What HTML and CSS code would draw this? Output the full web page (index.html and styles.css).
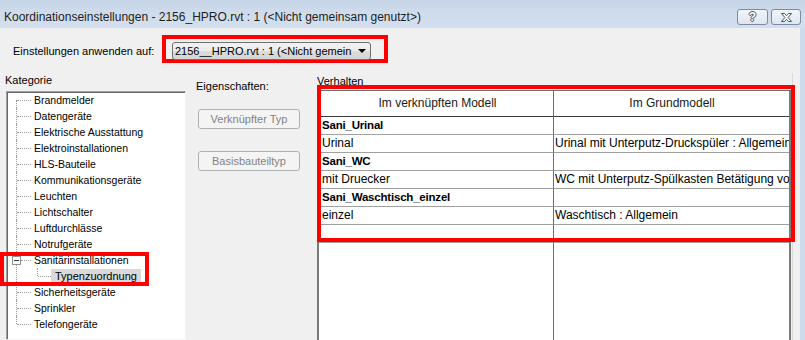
FILE: index.html
```html
<!doctype html>
<html lang="de">
	<head>
		<meta charset="UTF-8" />
		<meta name="viewport" content="width=device-width, initial-scale=1.0" />
		<title>Koordinationseinstellungen</title>
		<link rel="stylesheet" href="styles.css">
	</head>
	<body>
		<div class="window">
			<div class="titlebar">
				<span class="title">Koordinationseinstellungen - 2156_HPRO.rvt : 1 (&lt;Nicht gemeinsam genutzt&gt;)</span>
				<div class="caption-buttons">
					<button type="button" class="caption-btn help">?</button>
					<button type="button" class="caption-btn close">
						<svg width="11" height="9" viewBox="0 0 11 9">
							<path d="M0.5 0.5h3l2 2.2l2-2.2h3l-3.4 4l3.4 4h-3l-2-2.2l-2 2.2h-3l3.4-4z" fill="#fff" stroke="#4b5563" stroke-width="1" />
						</svg>
					</button>
				</div>
			</div>

			<div class="client">
				<div class="apply-row">
					<label class="apply-label">Einstellungen anwenden auf:</label>
					<div class="mark-combo">
						<div class="combo">
							<span class="combo-text">2156__HPRO.rvt : 1 (&lt;Nicht gemeinsam genutzt&gt;)</span>
							<span class="combo-arrow"></span>
						</div>
					</div>
				</div>

				<div class="main">
					<section class="category">
						<div class="cat-label">Kategorie</div>
						<ul class="tree">
							<li class="node"><span class="node-text">Brandmelder</span></li>
							<li class="node"><span class="node-text">Datengeräte</span></li>
							<li class="node"><span class="node-text">Elektrische Ausstattung</span></li>
							<li class="node"><span class="node-text">Elektroinstallationen</span></li>
							<li class="node"><span class="node-text">HLS-Bauteile</span></li>
							<li class="node"><span class="node-text">Kommunikationsgeräte</span></li>
							<li class="node"><span class="node-text">Leuchten</span></li>
							<li class="node"><span class="node-text">Lichtschalter</span></li>
							<li class="node"><span class="node-text">Luftdurchlässe</span></li>
							<li class="node"><span class="node-text">Notrufgeräte</span></li>
							<li class="node open">
								<span class="expander"></span>
								<span class="node-text">Sanitärinstallationen</span>
								<ul class="subtree">
									<li class="child"><span class="node-text selected">Typenzuordnung</span></li>
								</ul>
							</li>
							<li class="node"><span class="node-text">Sicherheitsgeräte</span></li>
							<li class="node"><span class="node-text">Sprinkler</span></li>
							<li class="node"><span class="node-text">Telefongeräte</span></li>
						</ul>
					</section>

					<section class="props">
						<div class="props-label">Eigenschaften:</div>
						<button type="button" class="btn" disabled>Verknüpfter Typ</button>
						<button type="button" class="btn second" disabled>Basisbauteiltyp</button>
					</section>

					<section class="behavior">
						<div class="behavior-label">Verhalten</div>
						<div class="grid">
							<div class="cell head first">Im verknüpften Modell</div>
							<div class="cell head">Im Grundmodell</div>

							<div class="cell first group">Sani_Urinal</div>
							<div class="cell"></div>
							<div class="cell first">Urinal</div>
							<div class="cell">Urinal mit Unterputz-Druckspüler : Allgemein</div>

							<div class="cell first group">Sani_WC</div>
							<div class="cell"></div>
							<div class="cell first">mit Druecker</div>
							<div class="cell">WC mit Unterputz-Spülkasten Betätigung von vorne</div>

							<div class="cell first group">Sani_Waschtisch_einzel</div>
							<div class="cell"></div>
							<div class="cell first">einzel</div>
							<div class="cell">Waschtisch : Allgemein</div>

							<div class="cell first"></div>
							<div class="cell"></div>

							<div class="cell first filler"></div>
							<div class="cell filler"></div>
						</div>
					</section>
				</div>
			</div>

			<!-- red annotation frames drawn over the dialog -->
			<div class="mark mark-tree"></div>
			<div class="mark mark-grid"></div>
		</div>
	</body>
</html>
```

FILE: styles.css
```css
* {
	box-sizing: border-box;
}

html,
body,
ul {
	margin: 0;
	padding: 0;
}

body {
	font-family: "Liberation Sans", Arial, sans-serif;
	font-size: 11px;
	color: #000;
	background: #f0f0f0;
}

.window {
	position: relative;
	width: 805px;
	height: 340px;
	display: flex;
	flex-direction: column;
	background: #cedbeb;
	overflow: hidden;
}

/* title bar */

.titlebar {
	height: 28px;
	flex: none;
	display: flex;
	justify-content: space-between;
	padding: 0 4px;
	background: linear-gradient(#c4d3e6, #cfdcec 45%, #d3dfee);
}

.title {
	font-size: 12px;
	line-height: 14px;
	margin-top: 10px;
	color: #1e1e1e;
	white-space: nowrap;
}

.caption-buttons {
	display: flex;
	gap: 3px;
	margin-top: 9px;
}

.caption-btn {
	width: 31px;
	height: 16px;
	padding: 0;
	border: 1px solid #7b8ba0;
	border-radius: 3px;
	background: linear-gradient(#f1f5fa, #dde6f1);
	display: flex;
	align-items: center;
	justify-content: center;
	font-family: "Liberation Sans", Arial, sans-serif;
	font-weight: bold;
	font-size: 12px;
	line-height: 12px;
	color: #fff;
}

.caption-btn.close {
	width: 30px;
}

.caption-btn.help {
	text-shadow: -1px 0 #4b5563, 1px 0 #4b5563, 0 -1px #4b5563, 0 1px #4b5563;
}

/* dialog body */

.client {
	flex: 1;
	min-height: 0;
	margin-right: 5px;
	background: #f0f0f0;
	display: flex;
	flex-direction: column;
}

.apply-row {
	height: 45px;
	flex: none;
	display: flex;
	align-items: flex-start;
	padding: 7px 0 0 13px;
}

.apply-label {
	width: 149px;
	margin-top: 9px;
	line-height: 14px;
	white-space: nowrap;
}

.mark-combo {
	height: 28px;
	border: 4px solid #ff0000;
	padding: 3px 13px 0 6px;
}

.combo {
	width: 199px;
	height: 18px;
	border: 1px solid #707070;
	border-radius: 3px;
	background: linear-gradient(#f2f2f2, #ebebeb 50%, #dddddd 51%, #d4d4d4);
	display: flex;
	align-items: center;
	padding: 0 4px 0 2px;
}

.combo-text {
	flex: 1;
	overflow: hidden;
	white-space: nowrap;
	line-height: 14px;
}

.combo-arrow {
	width: 0;
	height: 0;
	margin-left: 6px;
	border-left: 4px solid transparent;
	border-right: 4px solid transparent;
	border-top: 4px solid #000;
}

.main {
	flex: 1;
	min-height: 0;
	display: flex;
	padding-left: 5px;
}

/* category tree */

.category {
	width: 181px;
	flex: none;
	display: flex;
	flex-direction: column;
}

.cat-label {
	height: 18px;
	line-height: 14px;
}

.tree {
	flex: 1;
	margin-left: 1px;
	list-style: none;
	font-size: 10.5px;
	background: #fff;
	border: 1px solid;
	border-color: #a0a0a0 #f4f4f4 #f4f4f4 #a0a0a0;
	box-shadow: inset 1px 1px 0 #696969;
}

.node {
	position: relative;
	padding-left: 27px;
	line-height: 16px;
	white-space: nowrap;
}

.node::before {
	content: "";
	position: absolute;
	left: 9px;
	top: 0;
	bottom: 0;
	border-left: 1px dotted #9a9a9a;
}

.node::after {
	content: "";
	position: absolute;
	left: 10px;
	top: 8px;
	width: 14px;
	border-top: 1px dotted #9a9a9a;
}

.tree > .node:first-child::before {
	top: 8px;
}

.tree > .node:last-child::before {
	bottom: auto;
	height: 8px;
}

.node.open::after {
	left: 14px;
	width: 10px;
}

.expander {
	position: absolute;
	left: 5px;
	top: 4px;
	width: 9px;
	height: 9px;
	border: 1px solid #919191;
	background: #fff;
	z-index: 1;
}

.expander::after {
	content: "";
	position: absolute;
	left: 1px;
	top: 3px;
	width: 5px;
	border-top: 1px solid #333;
}

.subtree {
	list-style: none;
}

.child {
	position: relative;
	padding-left: 17px;
	line-height: 16px;
}

.child::before {
	content: "";
	position: absolute;
	left: 3px;
	top: 0;
	height: 8px;
	border-left: 1px dotted #9a9a9a;
}

.child::after {
	content: "";
	position: absolute;
	left: 4px;
	top: 8px;
	width: 13px;
	border-top: 1px dotted #9a9a9a;
}

.node-text.selected {
	display: inline-block;
	padding: 0 4px;
	height: 15px;
	line-height: 15px;
	font-size: 11px;
	background: #d9d9d9;
}

/* properties buttons */

.props {
	width: 121px;
	flex: none;
	margin-left: 10px;
	display: flex;
	flex-direction: column;
	align-items: flex-start;
}

.props-label {
	margin-top: 6px;
	line-height: 14px;
}

.btn {
	width: 102px;
	height: 20px;
	margin: 16px 0 0 2px;
	padding: 0;
	border: 1px solid #adb2b5;
	border-radius: 3px;
	background: #f4f4f4;
	color: #838383;
	font-family: "Liberation Sans", Arial, sans-serif;
	font-size: 11px;
}

.btn.second {
	margin-top: 22px;
}

/* behaviour grid */

.behavior {
	width: 474px;
	flex: none;
	display: flex;
	flex-direction: column;
	box-shadow: 1px 0 0 #f0f0f0, 2px 0 0 #dadada;
}

.behavior-label {
	height: 16px;
	margin-top: 1px;
	line-height: 14px;
}

.grid {
	flex: 1;
	display: grid;
	grid-template-columns: 235px 235px;
	grid-template-rows: 26px repeat(7, 18px) 1fr;
	background: #fff;
	border: 2px solid #7a7a7a;
	border-top: 1px solid #6e6e6e;
	border-bottom: 0;
	font-size: 12px;
}

.cell {
	min-width: 0;
	border-bottom: 1px solid #a0a0a0;
	padding-left: 1px;
	line-height: 17px;
	white-space: nowrap;
	overflow: hidden;
}

.cell.first {
	border-right: 1px solid #6e6e6e;
	padding-left: 3px;
}

.cell.head {
	border-bottom-color: #3c3c3c;
	text-align: center;
	line-height: 25px;
	color: #1a1a1a;
}

.cell.group {
	font-weight: bold;
	font-size: 11.5px;
	letter-spacing: -0.2px;
}

.cell.filler {
	border-bottom: 0;
}

/* annotation frames */

.mark {
	position: absolute;
	border: 4px solid #ff0000;
	pointer-events: none;
}

.mark-tree {
	left: 0;
	top: 252px;
	width: 149px;
	height: 34px;
}

.mark-grid {
	left: 317px;
	top: 85px;
	width: 478px;
	height: 157px;
}
```
